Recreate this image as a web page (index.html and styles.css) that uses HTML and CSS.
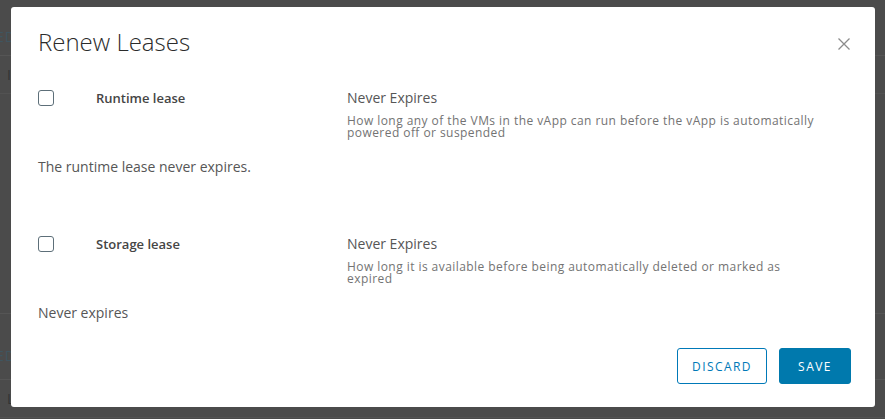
FILE: index.html
```html
<!DOCTYPE html>
<html>
<head>
<meta charset="utf-8">
<link rel="stylesheet" href="styles.css">
</head>
<body>
<div class="page">
  <div class="bg-header"><span class="bg-tab">ED</span></div>
  <div class="bg-row"><span class="bg-cell">I</span></div>
  <div class="bg-body"></div>
  <div class="bg-header bg-header-2"><span class="bg-tab">ED</span></div>
  <div class="bg-row"><span class="bg-cell">L</span></div>
</div>
<div class="backdrop">
  <div class="modal">
    <div class="modal-header">
      <h3 class="modal-title">Renew Leases</h3>
      <button class="close" aria-label="Close">
        <svg width="12" height="12" viewBox="0 0 12 12"><path d="M0.5 0.5 L11.5 11.5 M11.5 0.5 L0.5 11.5" stroke="#8c8c8c" stroke-width="1.3" fill="none"/></svg>
      </button>
    </div>
    <div class="modal-body">
      <section class="lease">
        <div class="lease-row">
          <span class="checkbox"></span>
          <span class="lease-label">Runtime lease</span>
          <div class="lease-value">
            <div class="value-text">Never Expires</div>
            <div class="helper">How long any of the VMs in the vApp can run before the vApp is automatically powered off or suspended</div>
          </div>
        </div>
        <p class="lease-note">The runtime lease never expires.</p>
      </section>
      <section class="lease lease-second">
        <div class="lease-row">
          <span class="checkbox"></span>
          <span class="lease-label">Storage lease</span>
          <div class="lease-value">
            <div class="value-text">Never Expires</div>
            <div class="helper">How long it is available before being automatically deleted or marked as expired</div>
          </div>
        </div>
        <p class="lease-note">Never expires</p>
      </section>
    </div>
    <div class="modal-footer">
      <button class="btn btn-outline">DISCARD</button>
      <button class="btn btn-primary">SAVE</button>
    </div>
  </div>
</div>
</body>
</html>
```
FILE: styles.css
```css
* { box-sizing: border-box; }
html, body { margin: 0; padding: 0; }
body {
  width: 885px;
  height: 419px;
  overflow: hidden;
  background: #4b4b4b;
  font-family: "Open Sans", "Liberation Sans", sans-serif;
  position: relative;
}
.page {
  display: flex;
  flex-direction: column;
}
.bg-header {
  height: 56px;
  border-bottom: 1px solid #555;
  display: flex;
  align-items: center;
}
.bg-header-2 {
  height: 67px;
  border-top: 1px solid #555;
}
.bg-tab {
  color: #3f5560;
  font-size: 14px;
  letter-spacing: 1px;
  margin-left: -4px;
  padding-top: 18px;
}
.bg-row {
  height: 38px;
  border-bottom: 1px solid #525252;
  display: flex;
  align-items: center;
}
.bg-body { height: 219px; }
.bg-cell {
  color: #333;
  font-size: 14px;
  margin-left: 7px;
}
.backdrop {
  position: absolute;
  inset: 0;
  padding: 7px 0 0 11px;
}
.modal {
  width: 864px;
  height: 400px;
  background: #fff;
  border-radius: 3px;
  display: flex;
  flex-direction: column;
  color: #565656;
}
.modal-header {
  display: flex;
  justify-content: space-between;
  align-items: flex-start;
  padding: 20px 24px 0 27px;
}
.modal-title {
  margin: 0;
  font-size: 24px;
  font-weight: 300;
  line-height: 30px;
  color: #2b2b2b;
}
.close {
  border: 0;
  background: none;
  padding: 0;
  margin-top: 11px;
  margin-right: 1px;
  width: 12px;
  height: 12px;
  display: flex;
}
.modal-body {
  flex: 1;
  padding: 0 24px 0 27px;
}
.lease { padding-top: 32px; }
.lease-second { padding-top: 58px; }
.lease-row {
  display: flex;
  align-items: flex-start;
}
.checkbox {
  width: 16px;
  height: 16px;
  border: 1px solid #5d6f79;
  border-radius: 3px;
  margin-top: 1px;
  flex: none;
}
.lease-label {
  margin-left: 42px;
  width: 251px;
  flex: none;
  font-size: 13px;
  font-weight: 600;
  color: #454545;
  line-height: 18px;
}
.lease-value { flex: none; width: 479px; }
.value-text {
  font-size: 14px;
  line-height: 18px;
  color: #565656;
}
.helper {
  margin-top: 8px;
  font-size: 12px;
  letter-spacing: 0.44px;
  line-height: 12px;
  color: #737373;
}
.lease-note {
  margin: 18px 0 0;
  font-size: 14px;
  line-height: 20px;
  color: #565656;
}
.modal-footer {
  display: flex;
  justify-content: flex-end;
  gap: 12px;
  padding: 0 24px 23px 0;
}
.btn {
  height: 36px;
  border-radius: 3px;
  font-family: inherit;
  font-size: 12px;
  font-weight: 500;
  letter-spacing: 0.12em;
  padding: 0 12px;
  cursor: pointer;
}
.btn-outline {
  width: 90px;
  background: #fff;
  border: 1px solid #0079b8;
  color: #0079b8;
}
.btn-primary {
  width: 72px;
  background: #0079ad;
  border: 1px solid #0079ad;
  color: #fff;
}
```
